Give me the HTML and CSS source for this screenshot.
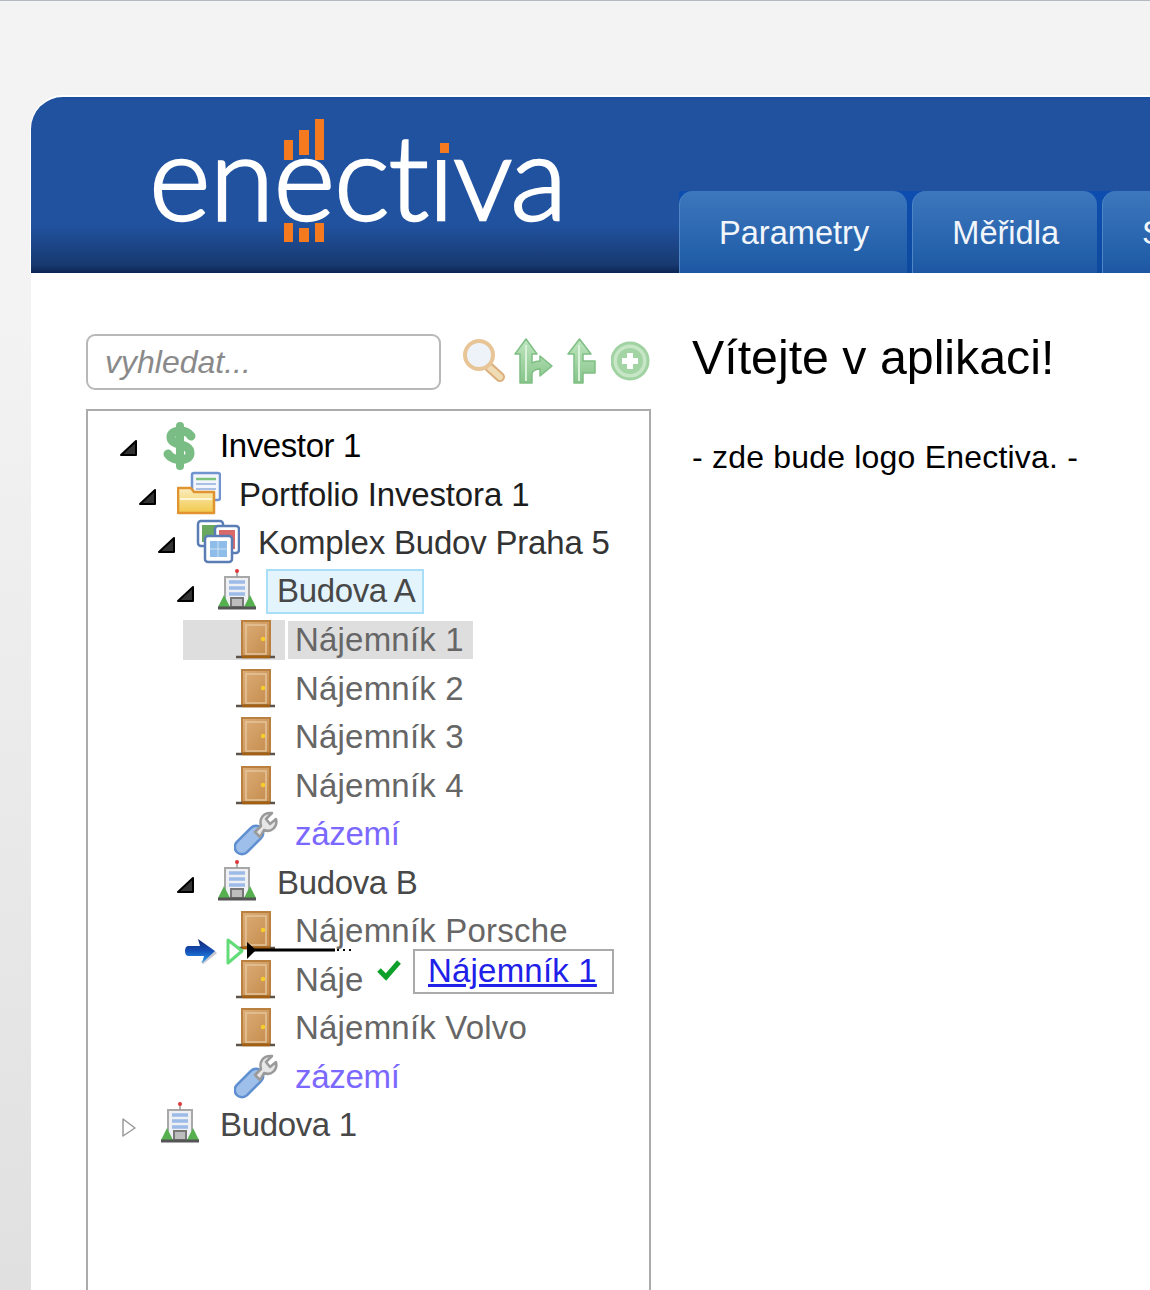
FILE: index.html
```html
<!DOCTYPE html>
<html lang="cs">
<head>
<meta charset="utf-8">
<title>Enectiva</title>
<link rel="stylesheet" href="styles.css">
</head>
<body>
<svg class="sprite" width="0" height="0" aria-hidden="true">
  <defs>
    <linearGradient id="gDoor" x1="0" y1="0" x2="1" y2="1"><stop offset="0" stop-color="#dcae78"/><stop offset="1" stop-color="#c58b4c"/></linearGradient>
    <linearGradient id="gArrow" x1="0" y1="0" x2="0" y2="1"><stop offset="0" stop-color="#bfe6c0"/><stop offset="1" stop-color="#86c489"/></linearGradient>
    <linearGradient id="gFolder" x1="0" y1="0" x2="0" y2="1"><stop offset="0" stop-color="#fbeec0"/><stop offset="1" stop-color="#f1c84a"/></linearGradient>
    <linearGradient id="gBlue" x1="0" y1="0" x2="0" y2="1"><stop offset="0" stop-color="#13256e"/><stop offset=".5" stop-color="#1450b8"/><stop offset="1" stop-color="#2aa0f0"/></linearGradient>
    <symbol id="i-door" viewBox="0 0 44 48">
      <rect x="8" y="5" width="28" height="35" fill="url(#gDoor)" stroke="#b9803f" stroke-width="2"/>
      <rect x="12" y="9" width="20" height="29" fill="none" stroke="#e4c49a" stroke-width="1.5"/>
      <circle cx="29" cy="23" r="2.2" fill="#f7cd2a"/>
      <path d="M2 41H41" stroke="#5e5348" stroke-width="2.5"/>
      <path d="M8 41H36" stroke="#a4600f" stroke-width="2.5"/>
    </symbol>
    <symbol id="i-building" viewBox="0 0 44 48">
      <rect x="10" y="9" width="24" height="30" fill="#eef0f3" stroke="#a8a8a8" stroke-width="2"/>
      <path d="M14 14H30M14 20H30M14 26H30" stroke="#9dbbe8" stroke-width="3.5"/>
      <rect x="16" y="30" width="12" height="9" fill="#bdbdbd" stroke="#777" stroke-width="2"/>
      <path d="M3 39 9 27 15 39ZM29 39 35 27 41 39Z" fill="#56b050"/>
      <path d="M3 40H41" stroke="#555" stroke-width="3"/>
      <path d="M22 3V9" stroke="#999" stroke-width="1.5"/>
      <circle cx="22" cy="3" r="2" fill="#e0363a"/>
    </symbol>
    <symbol id="i-wrench" viewBox="0 0 44 48">
      <path d="M8 37 22 23" stroke="#5f8fd0" stroke-width="17" stroke-linecap="round"/>
      <path d="M8 37 22 23" stroke="#9dbfe9" stroke-width="12" stroke-linecap="round"/>
      <path d="M21 22 27 16C25 9 29 2 38 3L32 9 36 14 42 9C44 17 37 23 30 20L26 27Z" fill="#e6e6e6" stroke="#9a9a9a" stroke-width="2.5" stroke-linejoin="round"/>
    </symbol>
    <symbol id="i-dollar" viewBox="0 0 44 48">
      <path d="M33 14C29 7 13 7 13 15C13 25 32 20 32 31C32 40 15 40 10 32" fill="none" stroke="#79bd84" stroke-width="9" stroke-linecap="round"/>
      <path d="M22 4V44" stroke="#79bd84" stroke-width="8" stroke-linecap="round"/>
    </symbol>
    <symbol id="i-portfolio" viewBox="0 0 44 48">
      <rect x="15" y="2" width="28" height="27" rx="2" fill="#f2f6fc" stroke="#6f94cf" stroke-width="2.5"/>
      <path d="M19 8H39" stroke="#7cc47e" stroke-width="2.5"/>
      <path d="M19 13H39M19 18H39M19 23H33" stroke="#a9c0e2" stroke-width="2"/>
      <path d="M1 17H14L17 21H37V42H1Z" fill="url(#gFolder)" stroke="#e0932f" stroke-width="2.5" stroke-linejoin="round"/>
      <path d="M3 28H35" stroke="#fff6d8" stroke-width="2"/>
    </symbol>
    <symbol id="i-complex" viewBox="0 0 44 48">
      <rect x="2" y="2" width="25" height="25" rx="3" fill="#fff" stroke="#5a7db6" stroke-width="2.5"/>
      <rect x="6" y="6" width="17" height="17" fill="#6aa860"/>
      <rect x="19" y="7" width="24" height="27" rx="3" fill="#fff" stroke="#5a7db6" stroke-width="2.5"/>
      <rect x="23" y="11" width="16" height="19" fill="#d96a6a"/>
      <rect x="9" y="17" width="27" height="26" rx="3" fill="#fff" stroke="#5a7db6" stroke-width="2.5"/>
      <rect x="14" y="22" width="17" height="16" fill="#8dbde8"/>
      <path d="M14 30H31M22 22V38" stroke="#cfe3f5" stroke-width="1"/>
    </symbol>
  </defs>
</svg>

<div class="app">
  <header class="header">
    <div class="logo">
      <span class="logo-text">enectiva</span>
      <svg class="logo-bars" width="180" height="130" viewBox="0 0 180 130" aria-hidden="true">
        <rect x="146" y="6" width="28" height="28" fill="#21529f"/>
        <path d="M0 21H9V41H0ZM15 11H25V36H15ZM31 0H40V41H31ZM0 104H9V123H0ZM15 109H25V123H15ZM31 104H40V123H31ZM156 24H165V34H156Z" fill="#f5791f"/>
      </svg>
    </div>
    <nav class="tabs">
      <a class="tab">Parametry</a>
      <a class="tab">Měřidla</a>
      <a class="tab">Správa</a>
    </nav>
  </header>

  <div class="content">
    <aside class="side">
      <div class="search">
        <input class="search-input" type="text" placeholder="vyhledat...">
        <div class="tools">
          <svg class="tool" width="44" height="46" viewBox="0 0 44 46" aria-hidden="true">
            <path d="M27 29 38 39" stroke="#dcae7c" stroke-width="10" stroke-linecap="round"/>
            <path d="M28 30 38 39" stroke="#f0dcb4" stroke-width="6" stroke-linecap="round"/>
            <circle cx="17" cy="17" r="14" fill="#eef3fa" stroke="#e8c596" stroke-width="4"/>
          </svg>
          <svg class="tool" width="40" height="46" viewBox="0 0 40 46" aria-hidden="true">
            <path d="M13 1 2 16H7V45H19V36C19 33 23 31 27 31V38L39 28 27 18V23C24 23 21 24 19 25V16H24Z" fill="url(#gArrow)" stroke="#7fbe83" stroke-width="1.5" stroke-linejoin="round"/>
            <path d="M13 7V43" stroke="#d9f0d9" stroke-width="2"/>
          </svg>
          <svg class="tool" width="32" height="46" viewBox="0 0 32 46" aria-hidden="true">
            <path d="M13.5 1 2 16H8V45H17V35H29V23H17V16H25Z" fill="url(#gArrow)" stroke="#7fbe83" stroke-width="1.5" stroke-linejoin="round"/>
            <path d="M13 7V43" stroke="#d9f0d9" stroke-width="2"/>
          </svg>
          <svg class="tool" width="40" height="46" viewBox="0 0 40 46" aria-hidden="true">
            <circle cx="19" cy="23" r="18" fill="#c6e6c6" stroke="#a0d2a2" stroke-width="3"/>
            <circle cx="19" cy="23" r="13" fill="#a2d4a4"/>
            <path d="M19 15V31M11 23H27" stroke="#fff" stroke-width="6"/>
          </svg>
        </div>
      </div>

      <div class="tree">
        <div class="row l0"><svg class="exp" viewBox="0 0 20 20"><path d="M2 17 17 3V17Z" fill="#333" stroke="#000" stroke-width="2" stroke-linejoin="round"/></svg><svg class="ico"><use href="#i-dollar"/></svg><span class="label c0">Investor 1</span></div>
        <div class="row l1"><svg class="exp" viewBox="0 0 20 20"><path d="M2 17 17 3V17Z" fill="#333" stroke="#000" stroke-width="2" stroke-linejoin="round"/></svg><svg class="ico"><use href="#i-portfolio"/></svg><span class="label c1">Portfolio Investora 1</span></div>
        <div class="row l2"><svg class="exp" viewBox="0 0 20 20"><path d="M2 17 17 3V17Z" fill="#333" stroke="#000" stroke-width="2" stroke-linejoin="round"/></svg><svg class="ico"><use href="#i-complex"/></svg><span class="label c2">Komplex Budov Praha 5</span></div>
        <div class="row l3"><svg class="exp" viewBox="0 0 20 20"><path d="M2 17 17 3V17Z" fill="#333" stroke="#000" stroke-width="2" stroke-linejoin="round"/></svg><svg class="ico"><use href="#i-building"/></svg><span class="label c3 focused">Budova A</span></div>
        <div class="row l4 selected"><span class="head"><span class="exp"></span><svg class="ico"><use href="#i-door"/></svg></span><span class="label c4">Nájemník 1</span></div>
        <div class="row l4"><span class="exp"></span><svg class="ico"><use href="#i-door"/></svg><span class="label c4">Nájemník 2</span></div>
        <div class="row l4"><span class="exp"></span><svg class="ico"><use href="#i-door"/></svg><span class="label c4">Nájemník 3</span></div>
        <div class="row l4"><span class="exp"></span><svg class="ico"><use href="#i-door"/></svg><span class="label c4">Nájemník 4</span></div>
        <div class="row l4"><span class="exp"></span><svg class="ico"><use href="#i-wrench"/></svg><span class="label c5">zázemí</span></div>
        <div class="row l3"><svg class="exp" viewBox="0 0 20 20"><path d="M2 17 17 3V17Z" fill="#333" stroke="#000" stroke-width="2" stroke-linejoin="round"/></svg><svg class="ico"><use href="#i-building"/></svg><span class="label c3">Budova B</span></div>
        <div class="row l4"><span class="exp"></span><svg class="ico"><use href="#i-door"/></svg><span class="label c4">Nájemník Porsche</span></div>
        <div class="row l4"><span class="exp"></span><svg class="ico"><use href="#i-door"/></svg><span class="label c4">Náje</span></div>
        <div class="row l4"><span class="exp"></span><svg class="ico"><use href="#i-door"/></svg><span class="label c4">Nájemník Volvo</span></div>
        <div class="row l4"><span class="exp"></span><svg class="ico"><use href="#i-wrench"/></svg><span class="label c5">zázemí</span></div>
        <div class="row l0"><svg class="exp" viewBox="0 0 20 20"><path d="M4 2 16 11 4 19Z" fill="#fff" stroke="#9a9a9a" stroke-width="1.5" stroke-linejoin="round"/></svg><svg class="ico"><use href="#i-building"/></svg><span class="label c3">Budova 1</span></div>

        <svg class="drag" width="170" height="32" viewBox="0 0 170 32" aria-hidden="true">
          <path d="M17 27 31 16" stroke="#c8c8d0" stroke-width="3"/>
          <path d="M3 10H15L13 3 30 15 17 27 19 20H3C-1 20-1 10 3 10Z" fill="url(#gBlue)"/>
          <path d="M43 4 57 15 43 27Z" fill="#fff" stroke="#62dc78" stroke-width="3" stroke-linejoin="round"/>
          <path d="M62 14H150" stroke="#000" stroke-width="3"/>
          <path d="M62 6 71 14 62 23Z" fill="#000"/>
          <path d="M152 14H168" stroke="#000" stroke-width="2" stroke-dasharray="2 4"/>
        </svg>
        <svg class="check" width="24" height="22" viewBox="0 0 24 22" aria-hidden="true">
          <path d="M2 11 9 18 22 3" fill="none" stroke="#0da02a" stroke-width="5"/>
        </svg>
        <div class="hint"><a class="hint-link">Nájemník 1</a></div>
      </div>
    </aside>

    <main class="main">
      <h1 class="title">Vítejte v aplikaci!</h1>
      <p class="note">- zde bude logo Enectiva. -</p>
    </main>
  </div>
</div>
</body>
</html>
```
FILE: styles.css
```css
html, body {
  margin: 0;
  height: 100%;
  overflow: hidden;
}
body {
  padding-top: 96px;
  box-sizing: border-box;
  border-top: 1px solid #b4b8c0;
  background: linear-gradient(#f3f3f3 0, #f3f3f3 320px, #e0e0e0 100%);
  font-family: "Liberation Sans", Arial, sans-serif;
  color: #000;
}
.sprite { position: absolute; }

.app {
  margin-left: 31px;
  height: 1193px;
  background: #fff;
  border-top-left-radius: 34px;
  filter: blur(0.45px);
}
.header {
  display: flex;
  align-items: flex-end;
  height: 176px;
  border-top-left-radius: 32px;
  background: linear-gradient(#1a4d9f 0, #21529f 3px, #21529f 128px, #17396f 168px, #0e2a5a 174px, #0a2458 176px);
  box-shadow: 0 -2px 0 #fff, -1px 0 0 #fff;
  overflow: hidden;
}
.logo {
  position: relative;
  flex: none;
  width: 648px;
  height: 176px;
}
.logo-text {
  position: absolute;
  left: 118px;
  top: 8px;
  font-family: Lato, "Liberation Sans", sans-serif;
  font-weight: 300;
  font-size: 118px;
  line-height: 140px;
  letter-spacing: -1px;
  color: #fff;
  -webkit-text-stroke: 2.5px #fff;
}
.logo-bars {
  position: absolute;
  left: 253px;
  top: 22px;
}
.tabs {
  display: flex;
  flex: none;
  gap: 5px;
  height: 82px;
  background: linear-gradient(#0d4db0, #0d4a9e);
}
.tab {
  display: flex;
  align-items: center;
  height: 82px;
  box-sizing: border-box;
  padding: 2px 38px 0 39px;
  border-radius: 14px 14px 0 0;
  border-left: 1px solid #4f86c6;
  background: linear-gradient(#3d77bd, #2461ab 75%, #1d57a3);
  font-size: 32.6px;
  color: #f2f6fb;
}

.content {
  display: flex;
  gap: 41px;
  padding: 61px 0 0 55px;
}
.side {
  flex: none;
  width: 565px;
}
.search {
  display: flex;
  align-items: center;
  gap: 21px;
  height: 56px;
  margin-bottom: 19px;
}
.search-input {
  width: 355px;
  height: 56px;
  box-sizing: border-box;
  padding: 0 0 0 17px;
  border: 2px solid #b8b8b8;
  border-radius: 9px;
  outline: 0;
  background: #fff;
  font-family: inherit;
  font-size: 32px;
}
.search-input::placeholder {
  color: #8a8a8a;
  font-style: italic;
  opacity: 1;
}
.tools {
  display: grid;
  grid-template-columns: 51px 53px 45px 40px;
  align-items: center;
  margin-top: -3px;
}
.tool { display: block; }

.tree {
  position: relative;
  box-sizing: border-box;
  height: 881px;
  padding-top: 11px;
  border: 2px solid #ababab;
  border-bottom: 0;
  background: #fff;
}
.row {
  display: flex;
  align-items: center;
  height: 48.5px;
  font-size: 33px;
  white-space: nowrap;
}
.l0 { padding-left: 31px; }
.l1 { padding-left: 50px; }
.l2 { padding-left: 69px; }
.l3 { padding-left: 88px; }
.l4 { padding-left: 107px; }
.exp {
  flex: none;
  display: block;
  width: 20px;
  height: 20px;
  margin-top: 4px;
}
.ico {
  flex: none;
  display: block;
  width: 44px;
  height: 48px;
  margin-left: 19px;
}
.head {
  display: flex;
  align-items: center;
}
.label {
  margin-left: 8px;
  padding: 0 10px;
  line-height: 40px;
}
.c0 { color: #000; letter-spacing: -0.4px; }
.c1 { color: #1c1c1c; letter-spacing: -0.15px; }
.c2 { color: #333; letter-spacing: -0.2px; }
.c3 { color: #484848; letter-spacing: -0.35px; }
.c4 { color: #666; letter-spacing: 0.2px; margin-left: 7px; }
.c5 { color: #7b68ff; letter-spacing: -0.3px; margin-left: 7px; }
.focused {
  height: 41px;
  margin-left: 7px;
  padding: 0 7px 0 9px;
  border: 2px solid #a9def8;
  background: #e4f4fc;
}
.selected .head {
  height: 40px;
  margin-left: -12px;
  padding: 0 7px 0 12px;
  background: #dedede;
}
.selected .label {
  height: 38px;
  line-height: 38px;
  margin-left: 3px;
  padding: 0 9px 0 7px;
  background: #dedede;
}

.drag {
  position: absolute;
  left: 97px;
  top: 525px;
}
.check {
  position: absolute;
  left: 289px;
  top: 548px;
}
.hint {
  position: absolute;
  left: 325px;
  top: 538px;
  box-sizing: border-box;
  width: 201px;
  height: 45px;
  padding-left: 13px;
  border: 2px solid #aaa;
  background: #fff;
  font-size: 33px;
  letter-spacing: 0.2px;
  line-height: 40px;
}
.hint-link {
  color: #2020e8;
  text-decoration: underline;
}

.main { flex: none; }
.title {
  margin: 0;
  font-size: 48.3px;
  font-weight: 400;
  line-height: 46px;
}
.note {
  margin: 57px 0 0;
  font-size: 32px;
  letter-spacing: 0.2px;
  line-height: 40px;
}
```
